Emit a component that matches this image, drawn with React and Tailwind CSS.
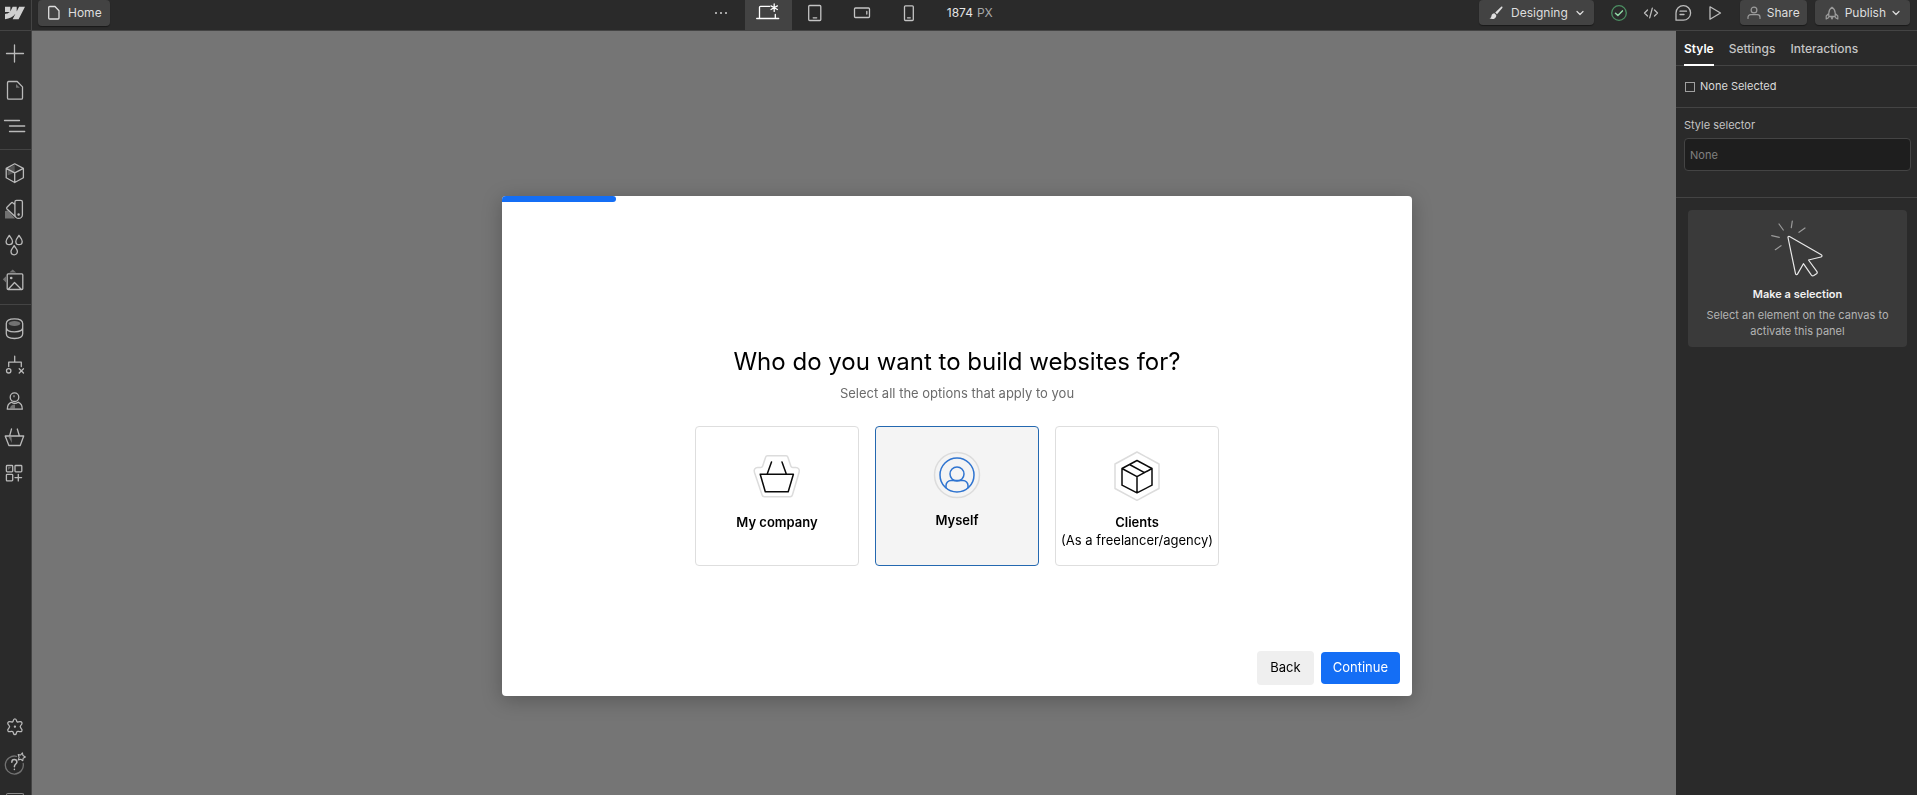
import { useState } from 'react';

const Icon = ({ size = 'size-[22px]', box = '0 0 22 22', children }) => (
  <svg className={`${size} shrink-0 overflow-visible`} viewBox={box} fill="none" stroke="currentColor" strokeWidth="1.3" strokeLinecap="round" strokeLinejoin="round" aria-hidden="true">
    {children}
  </svg>
);

const railGroups = [
  [
    { label: 'Add', icon: <path d="M10.5 2v17M2.5 10.5h17" /> },
    {
      label: 'Pages',
      icon: (
        <>
          <path d="M4.5 2.5h8.7l5.3 5.4v11a1.3 1.3 0 0 1-1.3 1.3H4.8a1.3 1.3 0 0 1-1.3-1.3V3.8a1.3 1.3 0 0 1 1-1.3z" />
          <path d="M12 5l3.8 3.8H12z" fill="currentColor" stroke="none" opacity=".5" />
        </>
      )
    },
    { label: 'Navigator', icon: <path d="M.5 5.5h15M5.5 11h15.2M5.5 16.5h15.2" /> }
  ],
  [
    {
      label: 'Components',
      icon: (
        <>
          <path d="M10.7 3l-7 3.4v7l7-3z" fill="currentColor" stroke="none" opacity=".3" />
          <path d="M10.7 1.8l8.7 4.6v9.3l-8.7 4.8-8.5-4.8V6.4zM2.2 6.4l8.5 4.4 8.7-4.4M10.7 10.8v9.7" />
        </>
      )
    },
    {
      label: 'Variables',
      icon: (
        <>
          <path d="M1 13l3-.5 7 8H1z" fill="currentColor" stroke="none" opacity=".5" />
          <path d="M12.5 2.3h4.3a1.6 1.6 0 0 1 1.6 1.6v12.8a3.7 3.7 0 0 1-7.5 0V3.9a1.6 1.6 0 0 1 1.6-1.6zM10.9 6.4L9 4.9a1.3 1.3 0 0 0-1.8.1L3 9.2a1.3 1.3 0 0 0 0 1.8l8.9 8.2" />
          <circle cx="14.6" cy="16.6" r=".6" fill="currentColor" />
        </>
      )
    },
    {
      label: 'Styles',
      icon: (
        <>
          <path d="M5.3 1.4C4.3 3.4 2.1 5 2.1 7.4a3.2 3.2 0 0 0 6.4 0c0-2.4-2.2-4-3.2-6z" />
          <path d="M15 1.4c-1 2-3.2 3.6-3.2 6a3.2 3.2 0 0 0 6.4 0c0-2.4-2.2-4-3.2-6z" />
          <path d="M10.2 11.6c-1 2-3.2 3.6-3.2 6a3.2 3.2 0 0 0 6.4 0c0-2.4-2.2-4-3.2-6z" />
        </>
      )
    },
    {
      label: 'Assets',
      icon: (
        <>
          <path d="M8.7-.6l3.4 3.2H5.3zM-1.2 9.3L2 6.2v6.4z" fill="currentColor" stroke="none" opacity=".5" />
          <path d="M4.2 3.9h13.6a1 1 0 0 1 1 1v13.6a1 1 0 0 1-1 1H4.2a1 1 0 0 1-1-1V4.9a1 1 0 0 1 1-1zM4.5 19l6-6.5L17 19" />
          <circle cx="7.2" cy="8" r=".7" fill="currentColor" />
        </>
      )
    }
  ],
  [
    {
      label: 'CMS',
      icon: (
        <>
          <ellipse cx="10.5" cy="6.5" rx="5.8" ry="2.6" fill="currentColor" stroke="none" opacity=".5" />
          <path d="M2.3 6.5c0-3 2.7-4.6 8.2-4.6s8.2 1.6 8.2 4.6v10.3c0 3-2.7 4.7-8.2 4.7s-8.2-1.7-8.2-4.7zM2.3 10.5c0 2.7 2.7 4.3 8.2 4.3s8.2-1.6 8.2-4.3" />
        </>
      )
    },
    {
      label: 'Logic',
      icon: (
        <>
          <path d="M10.7 3.2v6M4.7 13.5V9.2h12.6v4.3M15.2 15.7l4.3 4.3M19.5 15.7L15.2 20" />
          <circle cx="4.7" cy="17.8" r="2.2" />
        </>
      )
    },
    {
      label: 'Users',
      icon: (
        <>
          <circle cx="10.5" cy="8.2" r="4.3" />
          <path d="M7.5 13.2c-2.6 1-4.2 3.6-4.2 7h15c0-3.4-1.6-6-4.2-7a5.6 5.6 0 0 1-6.6 0z" />
          <path d="M6 19.5c.3-2.5 2-4 5-4v4zM9 6.2h2v2H9z" fill="currentColor" stroke="none" opacity=".5" />
        </>
      )
    },
    {
      label: 'Ecommerce',
      icon: (
        <>
          <path d="M4.5 12h3l.5 6z" fill="currentColor" stroke="none" opacity=".5" />
          <path d="M1.2 11h18.5l-3.5 9.5H4.9zM7.5 4L5.7 10.7M13.3 4l2 6.7" />
        </>
      )
    },
    {
      label: 'Apps',
      icon: (
        <>
          <path d="M4 6h3.5L4 9z" fill="currentColor" stroke="none" opacity=".4" />
          <rect x="2.4" y="4.5" width="6.3" height="6.3" rx=".8" />
          <rect x="11" y="4.5" width="6.8" height="6.3" rx=".8" />
          <rect x="2.4" y="13.3" width="6.3" height="6.6" rx=".8" />
          <path d="M14.3 13.3v6.6M11 16.6h6.6" />
        </>
      )
    }
  ]
];

const breakpoints = [
  {
    id: 'desktop',
    label: 'Desktop',
    icon: (
      <>
        <path d="M3.5 16V5.3a1 1 0 0 1 1-1h9.2M.7 16.5h22M19.3 12.5V16" />
        <path d="M18.2 2v7.4M15 3.9l6.4 3.6M21.4 3.9L15 7.5" />
      </>
    )
  },
  { id: 'tablet', label: 'Tablet', icon: <path d="M6.7 3.5h10.1a1 1 0 0 1 1 1v13a1 1 0 0 1-1 1H6.7a1 1 0 0 1-1-1v-13a1 1 0 0 1 1-1zM10.2 15.8h3.5" /> },
  { id: 'landscape', label: 'Mobile landscape', icon: <path d="M5.5 6h13a1 1 0 0 1 1 1v7.5a1 1 0 0 1-1 1h-13a1 1 0 0 1-1-1V7a1 1 0 0 1 1-1zM16.8 9.5V12" /> },
  { id: 'portrait', label: 'Mobile portrait', icon: <path d="M8.5 3.8h6.8a1 1 0 0 1 1 1v12.7a1 1 0 0 1-1 1H8.5a1 1 0 0 1-1-1V4.8a1 1 0 0 1 1-1zM10.5 15.8h2.8" /> }
];

const audiences = [
  {
    id: 'company',
    title: 'My company',
    icon: (
      <svg className="size-[50px]" viewBox="0 0 50 50" fill="none" strokeWidth="1.5" strokeLinecap="round" strokeLinejoin="round" aria-hidden="true">
        <path stroke="#dcdcdc" d="M15.5 4.8H34a2 2 0 0 1 1.9 1.4l3 9c.3.9 1 1.3 1.9 1.3h3c2.6 0 4.1 2.3 3.3 4.7L40.4 44a2.3 2.3 0 0 1-2.2 1.7H12.3a2.3 2.3 0 0 1-2.2-1.7L2.4 21.2c-.8-2.4.7-4.7 3.3-4.7h3c.9 0 1.6-.4 1.9-1.3l3-9a2 2 0 0 1 1.9-1.4z" />
        <path stroke="#0a0a0a" d="M8.2 23.3h33.2l-5.2 17.4H13.3zM19.5 11l-4.3 12M30 11l4.3 12" />
      </svg>
    )
  },
  {
    id: 'myself',
    title: 'Myself',
    icon: (
      <svg className="size-12" viewBox="0 0 48 48" fill="none" strokeWidth="1.5" strokeLinecap="round" aria-hidden="true">
        <circle stroke="#dcdcdc" cx="24" cy="24" r="22.5" />
        <g stroke="#2f74d0">
          <circle cx="24" cy="24" r="17" />
          <circle cx="24" cy="23" r="7" />
          <path d="M13 36.8v-2.3a5 5 0 0 1 5-5h12a5 5 0 0 1 5 5v2.3" />
        </g>
      </svg>
    )
  },
  {
    id: 'clients',
    title: 'Clients',
    note: '(As a freelancer/agency)',
    icon: (
      <svg className="size-[50px]" viewBox="0 0 50 50" fill="none" strokeWidth="1.5" strokeLinecap="round" strokeLinejoin="round" aria-hidden="true">
        <path stroke="#dcdcdc" d="M25 1l22 12v24.5L25 49.3 3 37.5V13z" />
        <path stroke="#0a0a0a" d="M25 9.5l15 8v16.7l-15 7.6-15-7.6V17.5zM10 17.5l15 8.2 15-8.2M25 25.7v16M17.5 13.5l15 8.1" />
      </svg>
    )
  }
];

const ToolButton = ({ className, children }) => (
  <button type="button" className={`flex items-center rounded-[4px] bg-[#434343] text-xs text-[#dedede] shadow-[0_1px_1px_rgba(0,0,0,0.4)] ${className}`}>
    {children}
  </button>
);

const Chevron = () => (
  <svg className="size-2 shrink-0" viewBox="0 0 8 8" fill="none" stroke="currentColor" strokeWidth="1.2" strokeLinecap="round" strokeLinejoin="round" aria-hidden="true">
    <path d="M1 2.5l3 3 3-3" />
  </svg>
);

const TopBar = () => (
  <header className="grid h-[31px] shrink-0 grid-cols-[19fr_auto_25fr] border-b border-[#444] bg-[#2a2a2a] text-xs text-[#d9d9d9]">
    <div className="flex items-start">
      <a href="#home" aria-label="Webflow" className="flex h-full w-8 items-center border-r border-[#444] pb-[5px] pl-[5px] text-[#cfcfcf]">
        <svg className="size-5" viewBox="0 0 24 24" fill="currentColor" aria-hidden="true">
          <path d="m24 4.515-7.658 14.97H9.149l3.205-6.204h-.144C9.566 16.713 5.621 18.973 0 19.485v-6.118s3.596-.213 5.71-2.435H0V4.515h6.417v5.278l.144-.001 2.622-5.277h4.854v5.244h.144l2.72-5.244H24Z" />
        </svg>
      </a>
      <ToolButton className="ml-1.5 h-[26px] gap-1.5 px-2">
        <Icon size="size-4" box="0 0 16 16">
          <path d="M3.7 1.5H9l4 4.200V13a1 1 0 0 1-1 1H3.700a1 1 0 0 1-1-1V2.500a1 1 0 0 1 1-1z" />
        </Icon>
        Home
      </ToolButton>
    </div>

    <div className="flex items-stretch">
      <button type="button" aria-label="More breakpoints" className="flex w-[47px] items-center justify-center gap-[3px] pb-[5px]">
        <span className="size-0.5 rounded-full bg-[#cfcfcf]" />
        <span className="size-0.5 rounded-full bg-[#cfcfcf]" />
        <span className="size-0.5 rounded-full bg-[#cfcfcf]" />
      </button>
      {breakpoints.map((bp) => (
        <button
          key={bp.id}
          type="button"
          aria-label={bp.label}
          className={`flex w-[47px] items-center justify-center pb-1 ${bp.id === 'desktop' ? 'bg-[#434343] text-white' : 'text-[#c4c4c4]'}`}
        >
          <Icon size="size-6" box="0 0 24 22">{bp.icon}</Icon>
        </button>
      ))}
      <p className="flex items-center gap-1 pr-1.5 pb-1 pl-3.5 whitespace-nowrap text-[#e4e4e4]">
        1874 <span className="text-[#a8a8a8]">PX</span>
      </p>
    </div>

    <div className="flex items-start justify-end pr-[7px] text-[#bdbdbd]">
      <ToolButton className="h-[25px] gap-2 px-2.5">
        <svg className="size-3.5 shrink-0" viewBox="0 0 14 14" fill="currentColor" aria-hidden="true">
          <path d="M13.3.7c.4.4.3.9 0 1.3L8 8.3 6.2 6.5l6-5.700c.3-.3.800-.4 1.100-.1zM5.400 7.300l1.800 1.800c.4 1.600-.6 3.400-2.500 3.800-1.500.3-3.200 0-4.200-.6 1.400-.2 1.600-1.100 1.900-2.400.3-1.600 1.500-2.600 3-2.600z" />
        </svg>
        Designing
        <Chevron />
      </ToolButton>
      <div className="flex h-[25px] items-center gap-2.5 px-3.5">
        <button type="button" aria-label="Status" className="text-[#4b8f62]">
          <Icon>
            <circle cx="11" cy="11" r="7.3" />
            <path d="M7.5 11.2l2.4 2.3 4.5-4.6" stroke="#8fd6a4" strokeWidth="1.5" />
          </Icon>
        </button>
        <button type="button" aria-label="Code">
          <Icon><path d="M7.5 8l-3 3 3 3M14.5 8l3 3-3 3M12.3 6.2L9.7 15.8" /></Icon>
        </button>
        <button type="button" aria-label="Comments">
          <Icon><path d="M4 18.2h7.2a7.3 7.3 0 1 0-7.2-7.3zM8 9.2h6.5M8 12.5h4" /></Icon>
        </button>
        <button type="button" aria-label="Preview">
          <Icon><path d="M6 4.8L16.5 11 6 17.2z" /></Icon>
        </button>
      </div>
      <ToolButton className="h-[25px] gap-1.5 px-[7px]">
        <svg className="size-3.5 shrink-0 overflow-visible text-[#9c9c9c]" viewBox="0 0 14 14" fill="none" stroke="currentColor" strokeWidth="1.2" strokeLinecap="round" strokeLinejoin="round" aria-hidden="true">
          <circle cx="7" cy="4" r="2.9" />
          <path d="M1 12.5v-1.3a2.6 2.6 0 0 1 2.6-2.6h6.8a2.6 2.6 0 0 1 2.6 2.6v1.3" />
        </svg>
        Share
      </ToolButton>
      <ToolButton className="ml-2 h-[25px] gap-1.5 px-2.5">
        <svg className="size-3.5 shrink-0 overflow-visible text-[#9c9c9c]" viewBox="0 0 14 14" fill="none" stroke="currentColor" strokeWidth="1.2" strokeLinecap="round" strokeLinejoin="round" aria-hidden="true">
          <path d="M7 1.2c2.2 1.5 3.2 3.6 3.2 6v3.2H3.8V7.2c0-2.4 1-4.5 3.2-6zM3.8 7.5L1.2 10v3l2.6-1.5M10.2 7.5l2.6 2.5v3l-2.6-1.5M5.8 10.4L7 13l1.2-2.6" />
        </svg>
        Publish
        <Chevron />
      </ToolButton>
    </div>
  </header>
);

const LeftRail = () => (
  <nav aria-label="Tools" className="flex w-8 shrink-0 flex-col border-r border-[#444] bg-[#2a2a2a] text-[#b9b9b9]">
    {railGroups.map((group, index) => (
      <div key={index} className={`flex flex-col border-[#444] py-[5px] pr-px ${index < railGroups.length - 1 ? 'border-b' : ''}`}>
        {group.map((item) => (
          <button key={item.label} type="button" aria-label={item.label} className="flex h-9 items-center justify-center">
            <Icon>{item.icon}</Icon>
          </button>
        ))}
      </div>
    ))}
    <div className="mt-auto flex flex-col pr-px">
      <button type="button" aria-label="Settings" className="flex h-9 items-center justify-center">
        <Icon>
          <path d="M10.9 2.8c1.2 0 1.5 1 1.7 2 .2 1 .9 1.4 1.9 1.1 1.7-.5 2.7-.6 3.4.6.7 1.3-.1 2-1.1 2.9-.8.8-.8 1.7 0 2.5 1 .9 1.8 1.6 1.1 2.9-.7 1.2-1.7 1.1-3.4.6-1-.3-1.7.1-1.9 1.100-.2 1-.5 2.200-1.700 2.200s-1.500-1.200-1.700-2.200c-.2-1-.9-1.400-1.900-1.100-1.700.5-2.700.6-3.400-.6-.7-1.300.1-2 1.100-2.900.8-.8.800-1.700 0-2.500-1-.9-1.800-1.600-1.100-2.900.7-1.200 1.700-1.100 3.400-.6 1 .3 1.700-.1 1.900-1.100.2-1 .5-2 1.700-2z" />
          <circle cx="10.9" cy="10.7" r=".5" fill="currentColor" />
        </Icon>
      </button>
      <button type="button" aria-label="Help" className="flex h-9 items-center justify-center">
        <Icon>
          <path d="M12.5 4.3a9 9 0 1 0 6.7 7.2" opacity=".5" />
          <path d="M7.8 10.3c0-1.7 1-2.7 2.5-2.7s2.6 1 2.6 2.4c0 2-2.5 2-2.5 4.4v.3M10.4 17.3v.3" strokeWidth="1.5" />
          <path d="M14.2 2.6l2.5.4 1.7-2.1.6 2.7 2.4 1.3-2.3 1.3-.3 2.6-2-1.5-2.5.6.8-2.6z" strokeWidth="1.1" />
        </Icon>
      </button>
      <button type="button" aria-label="Shortcuts" className="flex h-3.5 items-end justify-center">
        <span className="h-0.5 w-[18px] rounded-t-sm border-x border-t border-[#8a8a8a]" />
      </button>
    </div>
  </nav>
);

const StylePanel = () => (
  <aside className="w-[241px] shrink-0 bg-[#2a2a2a] text-[11px] text-[#c4c4c4]">
    <div role="tablist" className="flex h-[35px] gap-[15px] border-b border-[#444] px-2 text-xs font-medium">
      <button type="button" role="tab" aria-selected="true" className="-mb-px border-b-2 border-white pt-0.5 font-semibold text-white">Style</button>
      <button type="button" role="tab" aria-selected="false" className="pt-0.5">Settings</button>
      <button type="button" role="tab" aria-selected="false" className="pt-0.5">Interactions</button>
    </div>
    <div className="flex h-[42px] items-center gap-[5px] border-b border-[#444] px-[9px]">
      <input id="none-selected" type="checkbox" className="size-2.5 appearance-none border border-[#a0a0a0]" />
      <label htmlFor="none-selected" className="text-[#dadada]">None Selected</label>
    </div>
    <div className="flex flex-col gap-[5px] border-b border-[#444] pt-[9px] pr-1.5 pb-[26px] pl-2">
      <label htmlFor="style-selector" className="leading-4">Style selector</label>
      <input
        id="style-selector"
        type="text"
        placeholder="None"
        className="h-[33px] w-full rounded-[4px] border border-[#444] bg-[#1e1e1e] px-[5px] placeholder:text-[#808080]"
      />
    </div>
    <div className="mt-3 mr-2.5 ml-3 flex flex-col items-center rounded-[4px] bg-[#3a3a3a] px-4 pt-2.5 pb-2 text-center">
      <svg className="h-[58px] w-[54px]" viewBox="0 0 54 58" fill="none" stroke="#e8e8e8" strokeWidth="1.2" strokeLinecap="round" strokeLinejoin="round" aria-hidden="true">
        <path d="M17 17.5c-.1-.9.7-1.4 1.5-1l31.8 18.3c1 .6.9 1.9-.3 2.2L37.5 40l8.3 11.3c.7 1 .5 1.8-.3 2.4l-2.7 1.900c-.9.6-1.700.4-2.400-.5l-8-11.400-5.800 10.200c-.5 1-1.900.9-2.100-.3z" />
        <path stroke="#9a9a9a" d="M21.3 1l-1 6.7M8 4l4.3 6M34 8l-6 4.3M.7 15.7l7.6 1.6M4.3 29.7l5.7-4" />
      </svg>
      <h2 className="mt-[7px] leading-[18px] font-semibold text-[#f2f2f2]">Make a selection</h2>
      <p className="mt-1 leading-4 text-[#b4b4b4]">Select an element on the canvas to activate this panel</p>
    </div>
  </aside>
);

const OnboardingModal = () => {
  const [selected, setSelected] = useState(['myself']);

  const toggle = (id) => {
    setSelected((prev) => (prev.includes(id) ? prev.filter((item) => item !== id) : [...prev, id]));
  };

  return (
    <div className="fixed inset-0 flex items-center justify-center pt-[97px] pr-[3px]">
      <div role="dialog" aria-modal="true" aria-labelledby="onboarding-title" className="flex min-h-[500px] w-[910px] max-w-full flex-col overflow-hidden rounded-[4px] bg-white shadow-[0_4px_20px_rgba(0,0,0,0.25)]">
        <div className="h-1.5 w-1/8 rounded-r-full bg-[#146ef5]" />
        <div className="flex flex-col items-center pt-[140px]">
          <h1 id="onboarding-title" className="text-2xl leading-10 text-black">Who do you want to build websites for?</h1>
          <p className="mt-0.5 text-[13px] leading-[18px] text-[#6b6b6b]">Select all the options that apply to you</p>
          <div className="mt-6 flex gap-4">
            {audiences.map((item) => {
              const isSelected = selected.includes(item.id);
              return (
                <button
                  key={item.id}
                  type="button"
                  aria-pressed={isSelected}
                  onClick={() => toggle(item.id)}
                  className={`flex h-[140px] w-[164px] flex-col items-center rounded-[4px] border pt-6 text-[13px] leading-[18px] whitespace-nowrap text-black ${
                    isSelected ? 'border-[#2468b0] bg-[#f4f4f4]' : 'border-[#dedede] bg-white'
                  }`}
                >
                  {item.icon}
                  <span className="mt-3 font-semibold">{item.title}</span>
                  {item.note && <span>{item.note}</span>}
                </button>
              );
            })}
          </div>
        </div>
        <div className="mt-auto flex items-center justify-end gap-[7px] px-3 pb-[11px] text-[13px]">
          <button type="button" className="h-[34px] rounded-[4px] bg-[#efefef] px-[13px] text-black">Back</button>
          <button type="button" className="h-8 rounded-[4px] bg-[#146ef5] px-3 text-white">Continue</button>
        </div>
      </div>
    </div>
  );
};

const App = () => (
  <div className="flex h-screen flex-col overflow-hidden bg-[#757575] font-['Inter',sans-serif]">
    <TopBar />
    <div className="flex min-h-0 flex-1">
      <LeftRail />
      <main className="flex-1" />
      <StylePanel />
    </div>
    <OnboardingModal />
  </div>
);

export default App;
